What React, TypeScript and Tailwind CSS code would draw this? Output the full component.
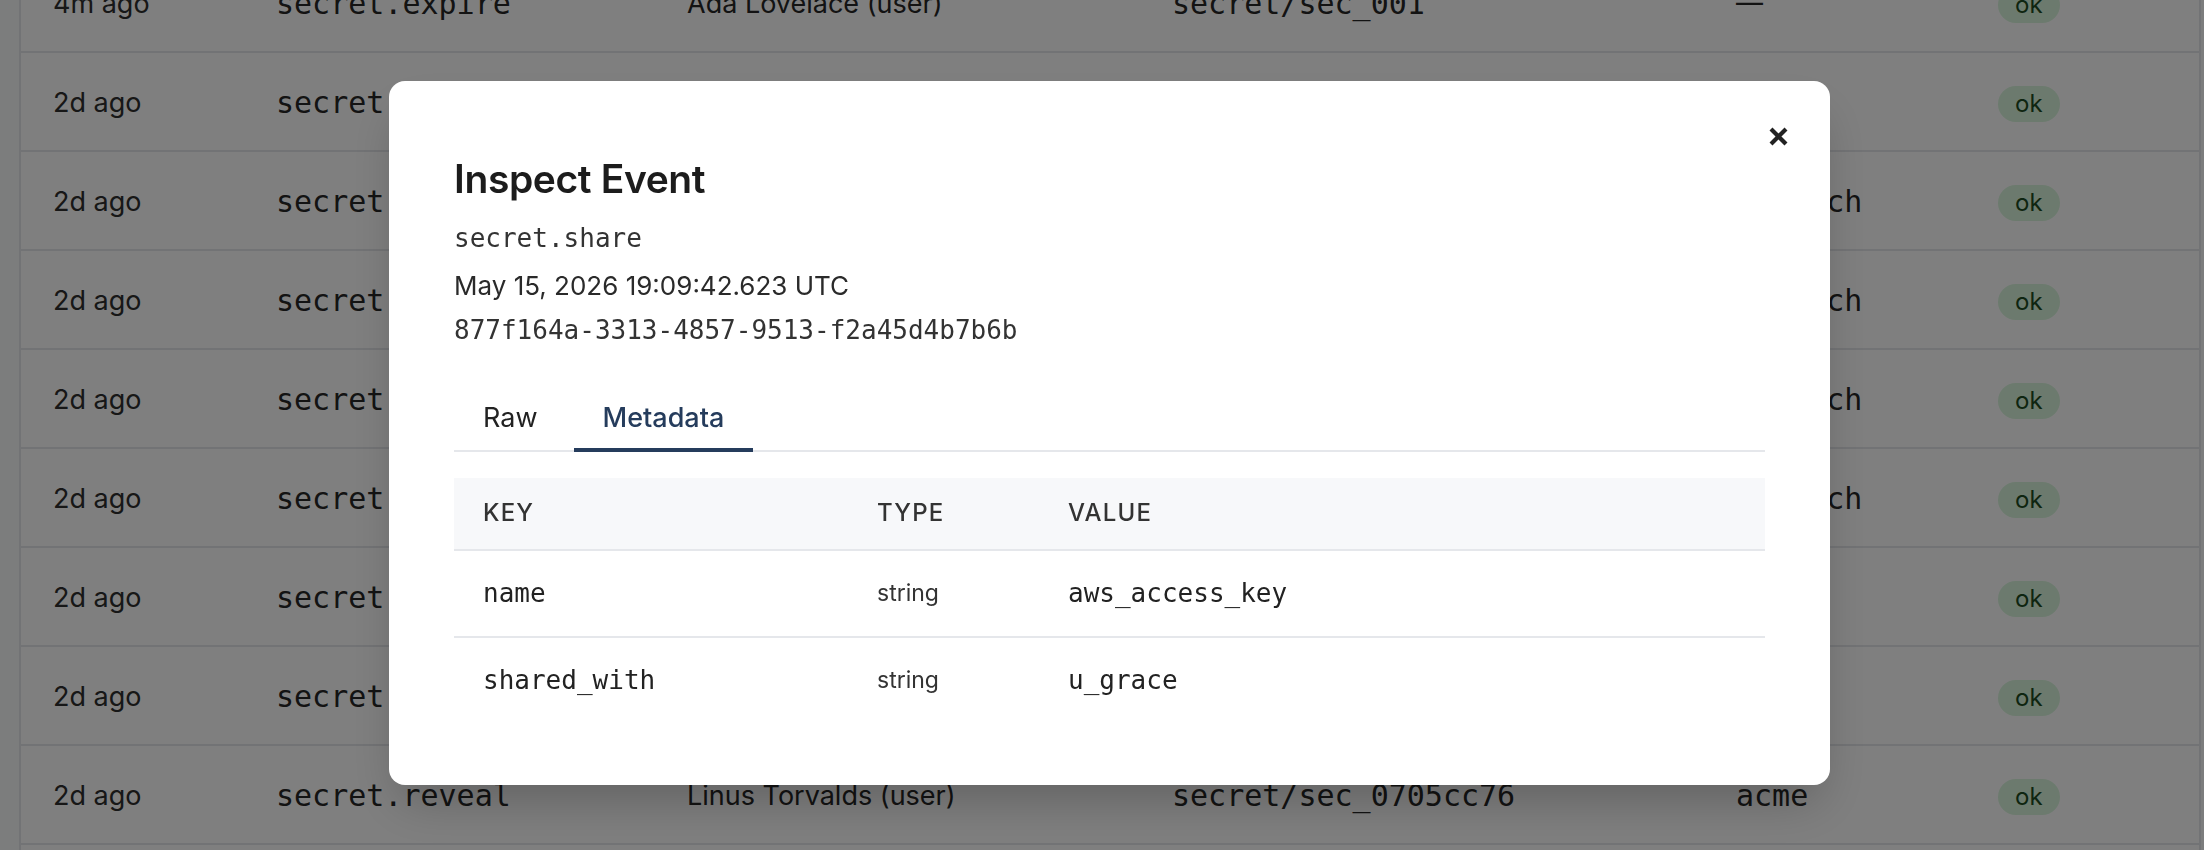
import React from "react";

type Row = { t: string; a: string; u: string; tg: string; tn: string; mono?: boolean };

const rows: Row[] = [
  { t: "4m ago", a: "secret.expire", u: "Ada Lovelace (user)", tg: "secret/sec_001", tn: "—", mono: false },
  { t: "2d ago", a: "secret.share", u: "Grace Hopper (user)", tg: "secret/sec_7d1e02aa", tn: "acme" },
  { t: "2d ago", a: "secret.read", u: "Alan Turing (user)", tg: "secret/sec_3f9a11b2", tn: "initech" },
  { t: "2d ago", a: "secret.read", u: "Alan Turing (user)", tg: "secret/sec_3f9a11b2", tn: "initech" },
  { t: "2d ago", a: "secret.update", u: "Alan Turing (user)", tg: "secret/sec_3f9a11b2", tn: "initech" },
  { t: "2d ago", a: "secret.create", u: "Alan Turing (user)", tg: "secret/sec_3f9a11b2", tn: "initech" },
  { t: "2d ago", a: "secret.rotate", u: "Grace Hopper (user)", tg: "secret/sec_7d1e02aa", tn: "acme" },
  { t: "2d ago", a: "secret.create", u: "Grace Hopper (user)", tg: "secret/sec_7d1e02aa", tn: "acme" },
  { t: "2d ago", a: "secret.reveal", u: "Linus Torvalds (user)", tg: "secret/sec_0705cc76", tn: "acme" },
  { t: "2d ago", a: "secret.create", u: "Linus Torvalds (user)", tg: "secret/sec_0705cc76", tn: "acme" },
];

const sans = "font-['Inter',sans-serif]";
const mono = "font-['DejaVu_Sans_Mono',monospace]";

function BgRow({ r }: { r: Row }) {
  return (
    <div className="grid h-[99px] grid-cols-[223px_411px_485px_564px_262px_1fr] items-center border-b-2 border-gray-200">
      <div className={`pl-[32px] pt-[3px] text-[27px] text-[#2e2e2e] ${sans}`}>{r.t}</div>
      <div className={`pl-[32px] pt-[2px] text-[30px] text-[#262626] ${mono}`}>{r.a}</div>
      <div className={`pl-[32px] pt-[3px] text-[27px] text-[#262626] ${sans}`}>{r.u}</div>
      <div className={`pl-[32px] pt-[2px] text-[30px] text-[#262626] ${mono}`}>{r.tg}</div>
      <div className={`pl-[32px] pt-[2px] text-[#262626] ${r.mono === false ? `text-[27px] ${sans}` : `text-[30px] ${mono}`}`}>{r.tn}</div>
      <div className="pl-[32px] pt-[5px]">
        <span className={`inline-flex h-[36px] items-center rounded-full bg-[#d8f5dc] px-[17px] text-[24px] text-[#1d4a22] ${sans}`}>ok</span>
      </div>
    </div>
  );
}

function CloseIcon() {
  return (
    <svg width="21" height="21" viewBox="0 0 21 21" fill="none">
      <path d="M3 3L18 18M18 3L3 18" stroke="#222" strokeWidth="4.2" strokeLinecap="butt" />
    </svg>
  );
}

export default function App() {
  const meta = [
    { k: "name", ty: "string", v: "aws_access_key" },
    { k: "shared_with", ty: "string", v: "u_grace" },
  ];
  return (
    <div className="relative h-[850px] w-full overflow-hidden bg-[#f9fafb]">
      <div className="ml-[19px] mr-[3px] -mt-[46px] border-x-2 border-gray-200 bg-white">
        {rows.map((r, i) => (
          <BgRow key={i} r={r} />
        ))}
      </div>

      <div className="fixed inset-0 flex items-center justify-center bg-black/50 pl-[15px] pt-[15px]">
        <div className={`relative w-[1441px] rounded-[16px] bg-white px-[65px] pt-[74px] pb-[62px] shadow-2xl ${sans}`}>
          <button className="absolute right-[41px] top-[45px] flex h-[21px] w-[21px] items-center justify-center">
            <CloseIcon />
          </button>
          <h2 className="text-[39px] font-semibold leading-[48px] tracking-[-0.01em] text-[#1c1c1c]">Inspect Event</h2>
          <div className={`mt-[17px] text-[26px] leading-[36px] text-[#333] ${mono}`}>secret.share</div>
          <div className="mt-[12px] text-[26px] leading-[36px] text-[#2a2a2a]">May 15, 2026 19:09:42.623 UTC</div>
          <div className={`mt-[8px] text-[26px] leading-[36px] text-[#333] ${mono}`}>877f164a-3313-4857-9513-f2a45d4b7b6b</div>

          <div className="mt-[38px] flex gap-[7px] border-b-2 border-[#e5e7eb]">
            <div className="-mb-[2px] border-b-4 border-transparent px-[29px] pt-[14px] pb-[12px] text-[27px] leading-[36px] text-[#222]">Raw</div>
            <div className="-mb-[2px] border-b-4 border-[#253c5c] px-[29px] pt-[14px] pb-[12px] text-[27px] font-medium leading-[36px] text-[#253c5c]">Metadata</div>
          </div>

          <div className="mt-[26px]">
            <div className="grid h-[73px] grid-cols-[394px_191px_1fr] items-center border-b-2 border-[#e5e7eb] bg-[#f7f8fa] text-[24px] font-medium uppercase tracking-[0.05em] text-[#333]">
              <div className="pl-[29px]">Key</div>
              <div className="pl-[29px]">Type</div>
              <div className="pl-[29px]">Value</div>
            </div>
            {meta.map((m, i) => (
              <div
                key={m.k}
                className={`grid grid-cols-[394px_191px_1fr] items-center ${i === 0 ? "h-[87px] border-b-2 border-[#e5e7eb]" : "h-[85px]"}`}
              >
                <div className={`pl-[29px] text-[26px] text-[#222] ${mono}`}>{m.k}</div>
                <div className="pl-[29px] text-[23px] text-[#333]">{m.ty}</div>
                <div className={`pl-[29px] text-[26px] text-[#222] ${mono}`}>{m.v}</div>
              </div>
            ))}
          </div>
        </div>
      </div>
    </div>
  );
}
